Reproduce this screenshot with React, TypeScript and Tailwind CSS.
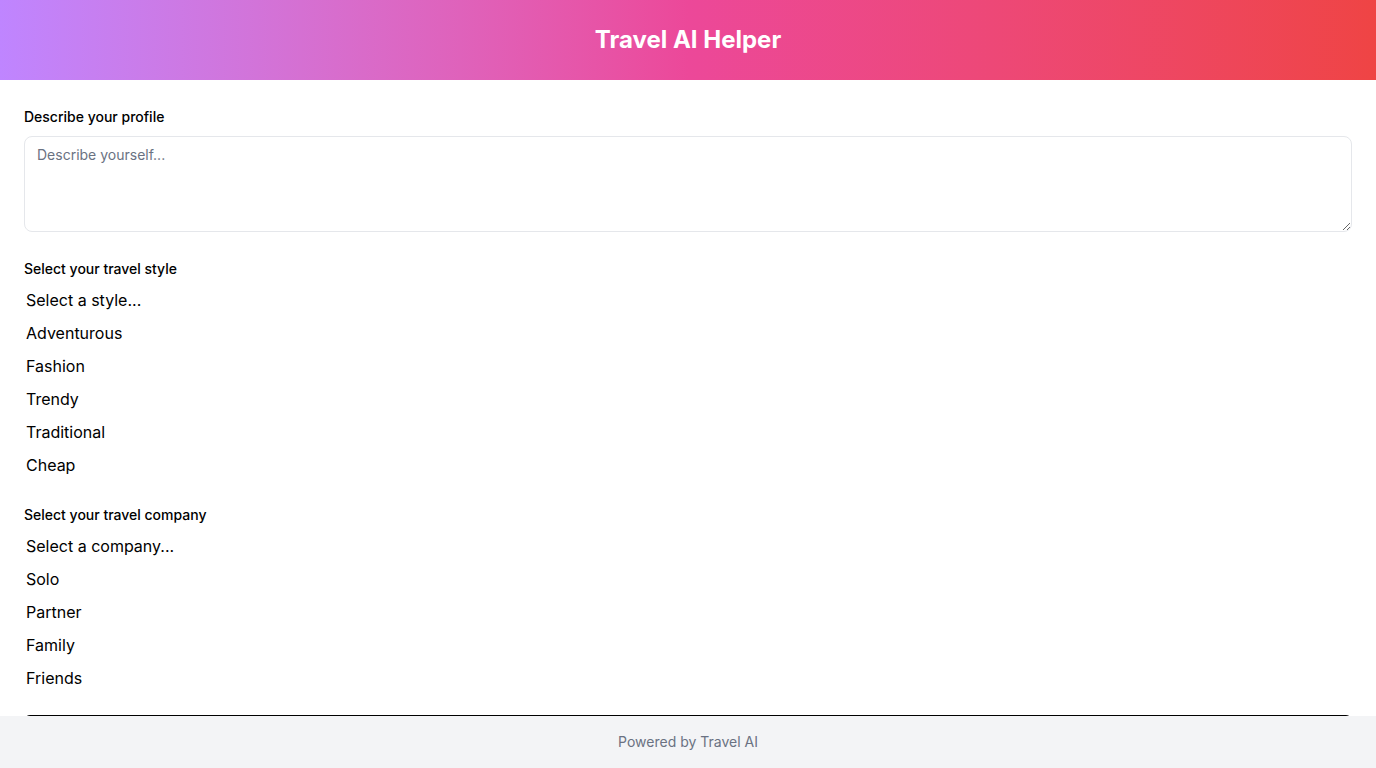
import React, { useState } from "react";

const styles = ["Adventurous", "Fashion", "Trendy", "Traditional", "Cheap"];
const companies = ["Solo", "Partner", "Family", "Friends"];

function OptionList({ placeholder, items }: { placeholder: string; items: string[] }) {
  return (
    <div className="flex flex-col text-base text-black">
      {[placeholder, ...items].map((item) => (
        <div key={item} className="h-[33px] flex items-center px-[2px]">
          {item}
        </div>
      ))}
    </div>
  );
}

export default function App() {
  const [profile, setProfile] = useState("");

  return (
    <div className="min-h-screen bg-white font-['Inter',sans-serif]">
      <header className="h-20 flex items-center justify-center bg-gradient-to-r from-[#bf85ff] via-[#ec4899] to-[#ef4444]">
        <h1 className="text-2xl font-bold text-white">Travel AI Helper</h1>
      </header>

      <main className="px-6 pt-[27px] pb-20">
        <label className="block text-sm font-medium text-black mb-[9px]">
          Describe your profile
        </label>
        <textarea
          value={profile}
          onChange={(e) => setProfile(e.target.value)}
          placeholder="Describe yourself..."
          className="block w-full h-24 px-3 py-2 text-sm text-gray-900 placeholder:text-gray-500 border border-gray-200 rounded-lg resize-y"
        />

        <label className="block text-sm font-medium text-black mt-[27px] mb-1">
          Select your travel style
        </label>
        <OptionList placeholder="Select a style..." items={styles} />

        <label className="block text-sm font-medium text-black mt-[24px] mb-[4px]">
          Select your travel company
        </label>
        <OptionList placeholder="Select a company..." items={companies} />

        {/* submit button sits under the fixed footer */}
        <button className="mt-[21px] w-full h-10 border border-black rounded-md" aria-label="Get recommendations" />
      </main>

      <footer className="fixed bottom-0 left-0 right-0 h-[52px] bg-gray-100 flex items-center justify-center text-sm text-gray-500">
        Powered by Travel AI
      </footer>
    </div>
  );
}
